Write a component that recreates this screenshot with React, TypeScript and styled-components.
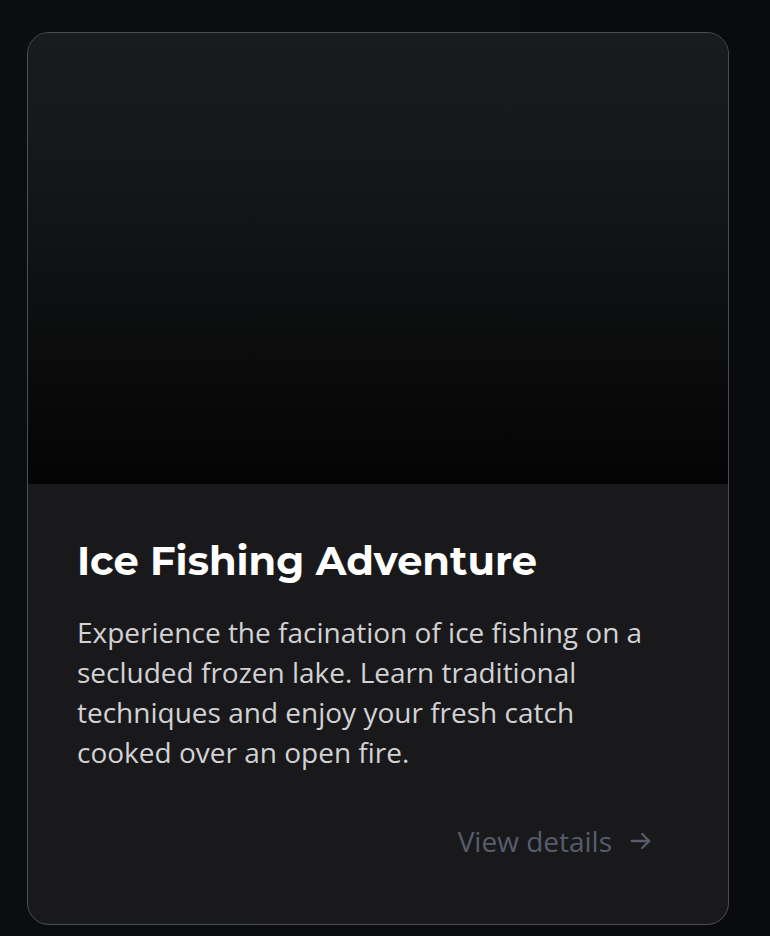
import React from "react";
import styled, { createGlobalStyle } from "styled-components";

const Global = createGlobalStyle`
  html, body { margin: 0; padding: 0; background: #0a0d10; }
  body { min-height: 936px; font-family: "Open Sans", "Noto Sans", sans-serif; }
`;

const Page = styled.div`
  min-height: 936px;
  padding: 32px 41px 0 27px;
  box-sizing: border-box;
  background: linear-gradient(90deg, #0a0e11 0%, #0a0c0f 60%, #0a0b0e 100%);
`;

const Card = styled.article`
  width: 702px;
  height: 893px;
  box-sizing: border-box;
  border: 1.5px solid #4d4e51;
  border-radius: 22px;
  overflow: hidden;
  background: #19191b;
  display: flex;
  flex-direction: column;
`;

const Media = styled.div`
  height: 451px;
  flex: none;
  background: linear-gradient(180deg, #1a1b1d 0%, #161718 30%, #0e0f10 60%, #040404 100%);
`;

const Body = styled.div`
  flex: 1;
  display: flex;
  flex-direction: column;
  padding: 52px 48px 0 49px;
`;

const Title = styled.h2`
  margin: 0;
  font-family: "Montserrat", "Inter", "Noto Sans", sans-serif;
  font-weight: 700;
  font-size: 40px;
  line-height: 50px;
  color: #ffffff;
`;

const Text = styled.p`
  margin: 26px 0 0;
  font-family: "Open Sans", "Noto Sans", sans-serif;
  font-size: 28px;
  line-height: 40px;
  color: #d2d2d4;
  max-width: 590px;
`;

const Link = styled.a`
  align-self: flex-end;
  margin: 49px 25px 0 0;
  display: flex;
  align-items: center;
  gap: 15px;
  font-family: "Open Sans", "Noto Sans", sans-serif;
  font-size: 28px;
  line-height: 40px;
  color: #575d6c;
  text-decoration: none;
`;

const Arrow = () => (
  <svg width="28" height="28" viewBox="0 0 24 24" fill="none" stroke="#575d6c" strokeWidth="2" strokeLinecap="round" strokeLinejoin="round">
    <path d="M4 12h15" />
    <path d="M13 6l6 6-6 6" />
  </svg>
);

export default function App() {
  return (
    <>
      <Global />
      <Page>
        <Card>
          <Media />
          <Body>
            <Title>Ice Fishing Adventure</Title>
            <Text>
              Experience the facination of ice fishing on a secluded frozen lake. Learn traditional techniques and enjoy your fresh catch cooked over an open fire.
            </Text>
            <Link href="#">
              View details
              <Arrow />
            </Link>
          </Body>
        </Card>
      </Page>
    </>
  );
}
